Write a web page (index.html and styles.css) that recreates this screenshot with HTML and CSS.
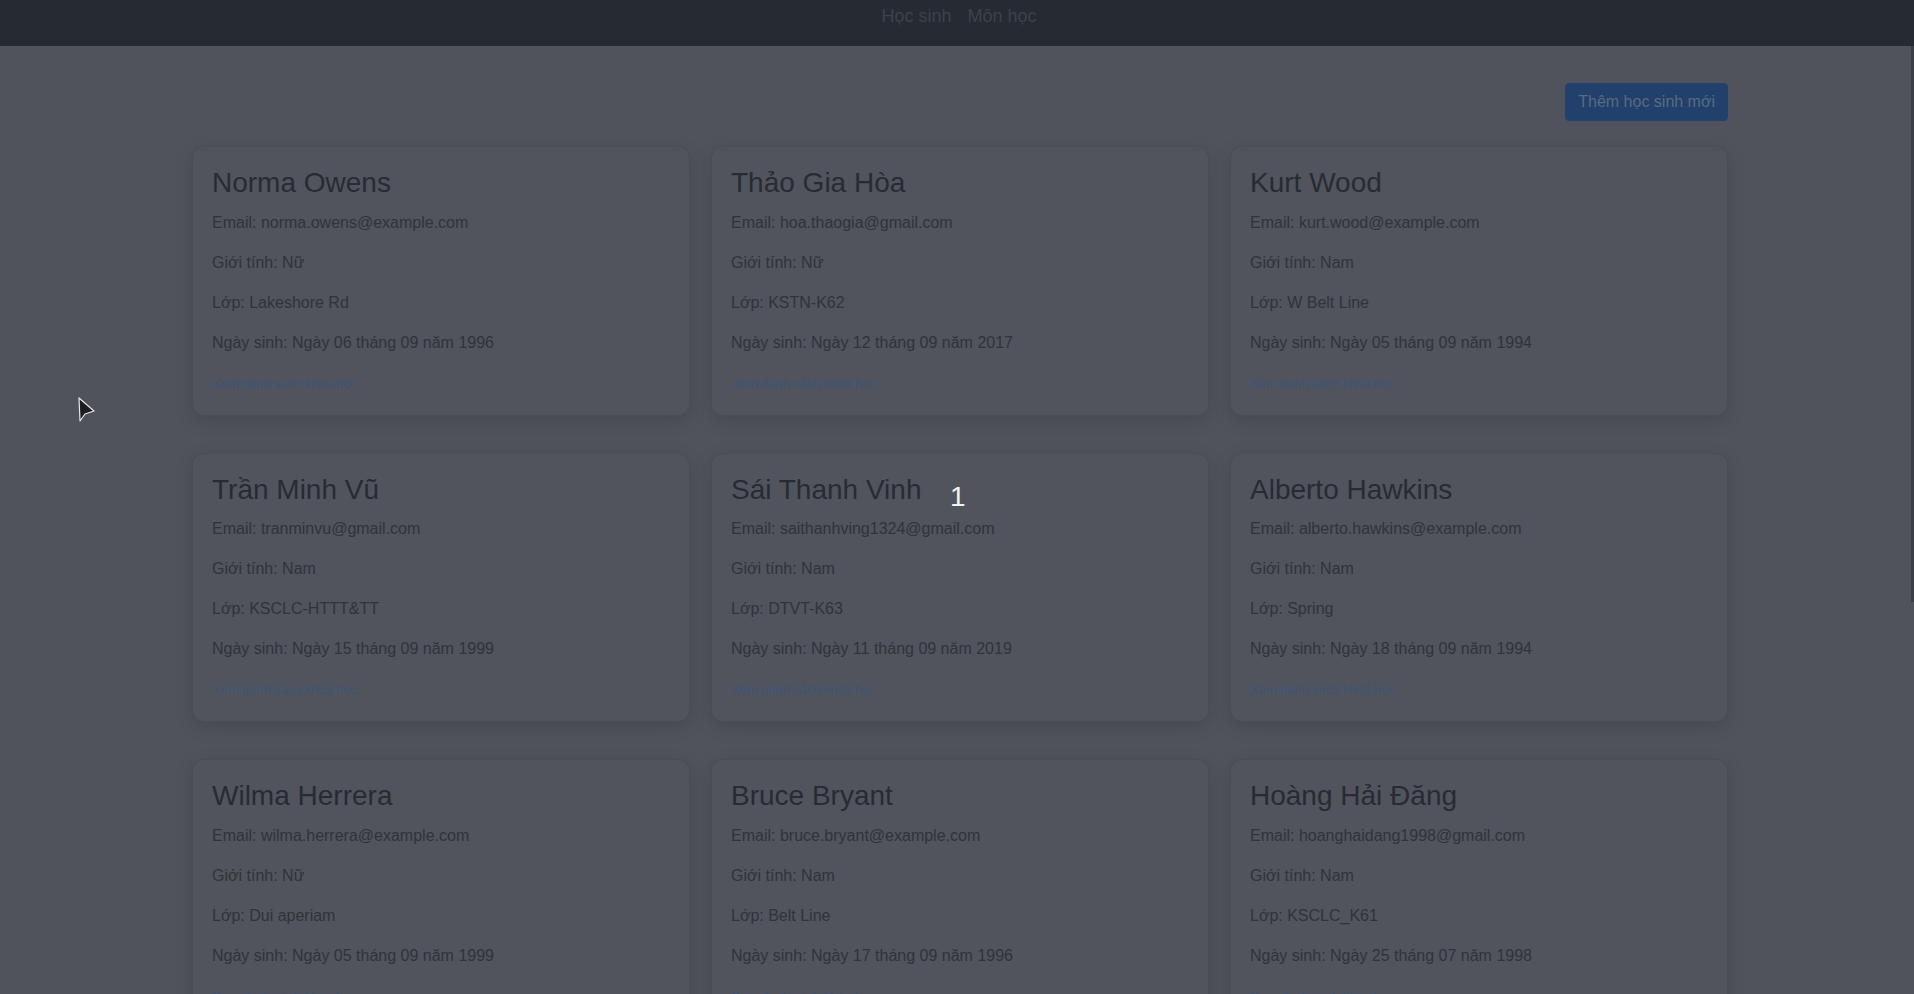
FILE: index.html
```html
<!DOCTYPE html>
<html lang="vi">
<head>
<meta charset="utf-8">
<title>Học sinh</title>
<link rel="stylesheet" href="styles.css">
</head>
<body>
<nav class="topbar">
  <a class="nav-link" href="#">Học sinh</a>
  <a class="nav-link" href="#">Môn học</a>
</nav>
<main class="container">
  <div class="toolbar">
    <button class="btn-primary" type="button">Thêm học sinh mới</button>
  </div>
  <div class="grid">
    <div class="card">
      <h3 class="card-title">Norma Owens</h3>
      <p>Email: norma.owens@example.com</p>
      <p>Giới tính: Nữ</p>
      <p>Lớp: Lakeshore Rd</p>
      <p>Ngày sinh: Ngày 06 tháng 09 năm 1996</p>
      <p class="last"><a class="course-link" href="#">Xem danh sách khóa học</a></p>
    </div>
    <div class="card">
      <h3 class="card-title">Thảo Gia Hòa</h3>
      <p>Email: hoa.thaogia@gmail.com</p>
      <p>Giới tính: Nữ</p>
      <p>Lớp: KSTN-K62</p>
      <p>Ngày sinh: Ngày 12 tháng 09 năm 2017</p>
      <p class="last"><a class="course-link" href="#">Xem danh sách khóa học</a></p>
    </div>
    <div class="card">
      <h3 class="card-title">Kurt Wood</h3>
      <p>Email: kurt.wood@example.com</p>
      <p>Giới tính: Nam</p>
      <p>Lớp: W Belt Line</p>
      <p>Ngày sinh: Ngày 05 tháng 09 năm 1994</p>
      <p class="last"><a class="course-link" href="#">Xem danh sách khóa học</a></p>
    </div>
    <div class="card">
      <h3 class="card-title">Trần Minh Vũ</h3>
      <p>Email: tranminvu@gmail.com</p>
      <p>Giới tính: Nam</p>
      <p>Lớp: KSCLC-HTTT&amp;TT</p>
      <p>Ngày sinh: Ngày 15 tháng 09 năm 1999</p>
      <p class="last"><a class="course-link" href="#">Xem danh sách khóa học</a></p>
    </div>
    <div class="card">
      <h3 class="card-title">Sái Thanh Vinh</h3>
      <p>Email: saithanhving1324@gmail.com</p>
      <p>Giới tính: Nam</p>
      <p>Lớp: DTVT-K63</p>
      <p>Ngày sinh: Ngày 11 tháng 09 năm 2019</p>
      <p class="last"><a class="course-link" href="#">Xem danh sách khóa học</a></p>
    </div>
    <div class="card">
      <h3 class="card-title">Alberto Hawkins</h3>
      <p>Email: alberto.hawkins@example.com</p>
      <p>Giới tính: Nam</p>
      <p>Lớp: Spring</p>
      <p>Ngày sinh: Ngày 18 tháng 09 năm 1994</p>
      <p class="last"><a class="course-link" href="#">Xem danh sách khóa học</a></p>
    </div>
    <div class="card">
      <h3 class="card-title">Wilma Herrera</h3>
      <p>Email: wilma.herrera@example.com</p>
      <p>Giới tính: Nữ</p>
      <p>Lớp: Dui aperiam</p>
      <p>Ngày sinh: Ngày 05 tháng 09 năm 1999</p>
      <p class="last"><a class="course-link" href="#">Xem danh sách khóa học</a></p>
    </div>
    <div class="card">
      <h3 class="card-title">Bruce Bryant</h3>
      <p>Email: bruce.bryant@example.com</p>
      <p>Giới tính: Nam</p>
      <p>Lớp: Belt Line</p>
      <p>Ngày sinh: Ngày 17 tháng 09 năm 1996</p>
      <p class="last"><a class="course-link" href="#">Xem danh sách khóa học</a></p>
    </div>
    <div class="card">
      <h3 class="card-title">Hoàng Hải Đăng</h3>
      <p>Email: hoanghaidang1998@gmail.com</p>
      <p>Giới tính: Nam</p>
      <p>Lớp: KSCLC_K61</p>
      <p>Ngày sinh: Ngày 25 tháng 07 năm 1998</p>
      <p class="last"><a class="course-link" href="#">Xem danh sách khóa học</a></p>
    </div>
  </div>
</main>
<div class="marker">1</div>
<svg class="pointer" width="20" height="28" viewBox="0 0 20 28">
  <polygon points="2,2 3,25 8,18 17,15" fill="#1b1d21" stroke="#e8e8e8" stroke-width="1.2" stroke-linejoin="round"/>
</svg>
<div class="scroll-thumb"></div>
</body>
</html>
```
FILE: styles.css
```css
html {
  scrollbar-width: none;
}
html::-webkit-scrollbar {
  display: none;
}
body {
  margin: 0;
  background: #50535b;
  font-family: "Liberation Sans", Arial, sans-serif;
  font-size: 16px;
  line-height: 1.5;
  color: #2f333a;
}
.topbar {
  height: 46px;
  box-sizing: border-box;
  padding-top: 3px;
  background: #262a32;
  display: flex;
  justify-content: center;
  align-items: flex-start;
  gap: 16px;
  padding-left: 4px;
}
.nav-link {
  font-size: 18px;
  line-height: 27px;
  color: #3d424b;
  text-decoration: none;
}
.container {
  width: 1536px;
  margin: 37px 186px 0 192px;
}
.toolbar {
  display: flex;
  justify-content: flex-end;
  margin-bottom: 25px;
}
.btn-primary {
  font-family: "Liberation Sans", Arial, sans-serif;
  font-size: 16px;
  line-height: 24px;
  padding: 6px 12px;
  border: 1px solid #22416c;
  border-radius: 4px;
  background: #21406b;
  color: #5a6a80;
}
.grid {
  display: grid;
  grid-template-columns: repeat(3, 498px);
  column-gap: 21px;
  row-gap: 37px;
}
.card {
  border: 1px solid #4a4d55;
  border-radius: 12px;
  background: #51545c;
  padding: 19px 19px 20px 19px;
  box-shadow: 0 5px 18px rgba(0, 0, 0, 0.13);
}
.card-title {
  margin: 0 0 11px;
  font-size: 28px;
  font-weight: 400;
  line-height: 1.2;
  color: #272b33;
}
.card p {
  margin: 0 0 16px;
}
.card p.last {
  margin: 0;
}
.course-link {
  font-size: 12.8px;
  color: #3a5679;
  text-decoration: none;
}
.marker {
  position: absolute;
  left: 950px;
  top: 481px;
  font-size: 28px;
  line-height: 32px;
  color: #f2f2f2;
}
.pointer {
  position: absolute;
  left: 77px;
  top: 396px;
}
.scroll-thumb {
  position: fixed;
  right: 0;
  top: 46px;
  width: 3px;
  height: 556px;
  background: #3b3e46;
}
```
